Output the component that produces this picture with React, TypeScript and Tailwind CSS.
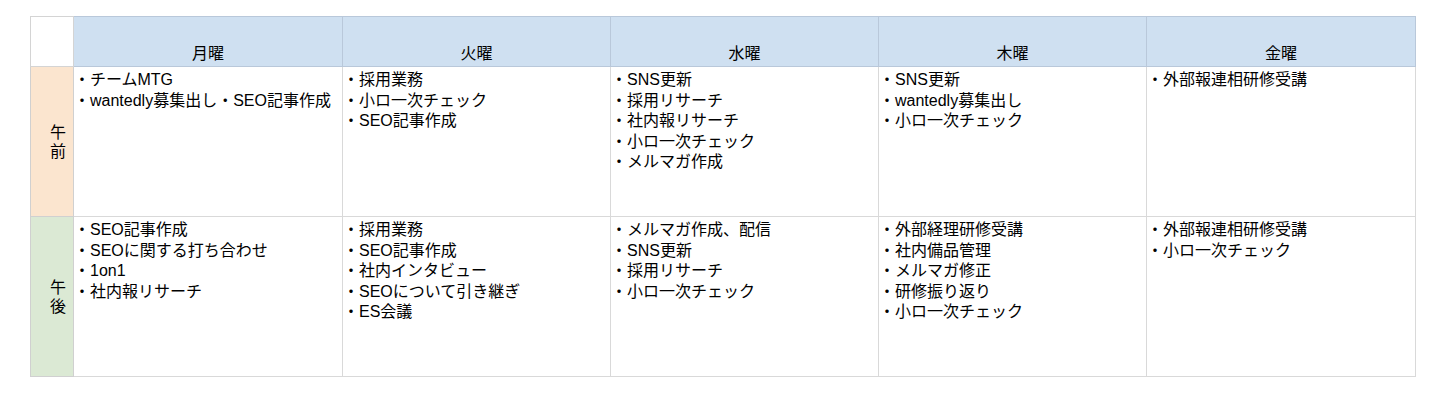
import React from "react";

const days = ["月曜", "火曜", "水曜", "木曜", "金曜"];

const rows: { label: string[]; bg: string; height: string; cells: string[][] }[] = [
  {
    label: ["午", "前"],
    bg: "bg-[#fbe5cf]",
    height: "h-[150px]",
    cells: [
      ["・チームMTG", "・wantedly募集出し・SEO記事作成"],
      ["・採用業務", "・小ロ一次チェック", "・SEO記事作成"],
      ["・SNS更新", "・採用リサーチ", "・社内報リサーチ", "・小ロ一次チェック", "・メルマガ作成"],
      ["・SNS更新", "・wantedly募集出し", "・小ロ一次チェック"],
      ["・外部報連相研修受講"],
    ],
  },
  {
    label: ["午", "後"],
    bg: "bg-[#dbe9d4]",
    height: "h-[160px]",
    cells: [
      ["・SEO記事作成", "・SEOに関する打ち合わせ", "・1on1", "・社内報リサーチ"],
      ["・採用業務", "・SEO記事作成", "・社内インタビュー", "・SEOについて引き継ぎ", "・ES会議"],
      ["・メルマガ作成、配信", "・SNS更新", "・採用リサーチ", "・小ロ一次チェック"],
      ["・外部経理研修受講", "・社内備品管理", "・メルマガ修正", "・研修振り返り", "・小ロ一次チェック"],
      ["・外部報連相研修受講", "・小ロ一次チェック"],
    ],
  },
];

export default function App() {
  return (
    <div
      className="w-[1440px] h-[406px] bg-white pt-[16px] pl-[30px] text-black"
      style={{ fontFamily: '"Liberation Sans", "Noto Sans CJK JP", sans-serif' }}>
      <table className="table-fixed border-collapse w-[1385px] text-[16px]">
        <colgroup>
          <col className="w-[43px]" />
          <col className="w-[269px]" />
          <col className="w-[268px]" />
          <col className="w-[268px]" />
          <col className="w-[268px]" />
          <col className="w-[269px]" />
        </colgroup>
        <thead>
          <tr className="h-[50px]">
            <th className="border border-[#d4d4d4] bg-white p-0" />
            {days.map((d) => (
              <th
                key={d}
                className="border border-[#b9c8da] bg-[#cfe0f1] p-0 pb-[2px] align-bottom text-center font-normal leading-[20px]">
                {d}
              </th>
            ))}
          </tr>
        </thead>
        <tbody>
          {rows.map((row, ri) => (
            <tr key={ri} className={row.height}>
              <td className={`border border-[#d0d0d0] ${row.bg} p-0 align-middle`}>
                <div className="flex flex-col items-end pr-[7px] leading-[19px]">
                  {row.label.map((c) => (
                    <span key={c}>{c}</span>
                  ))}
                </div>
              </td>
              {row.cells.map((items, ci) => (
                <td key={ci} className="border border-[#d9d9d9] p-0 pt-[3px] align-top">
                  <ul className="flex flex-col leading-[20.5px] whitespace-nowrap">
                    {items.map((it, ii) => (
                      <li key={ii}>{it}</li>
                    ))}
                  </ul>
                </td>
              ))}
            </tr>
          ))}
        </tbody>
      </table>
    </div>
  );
}
